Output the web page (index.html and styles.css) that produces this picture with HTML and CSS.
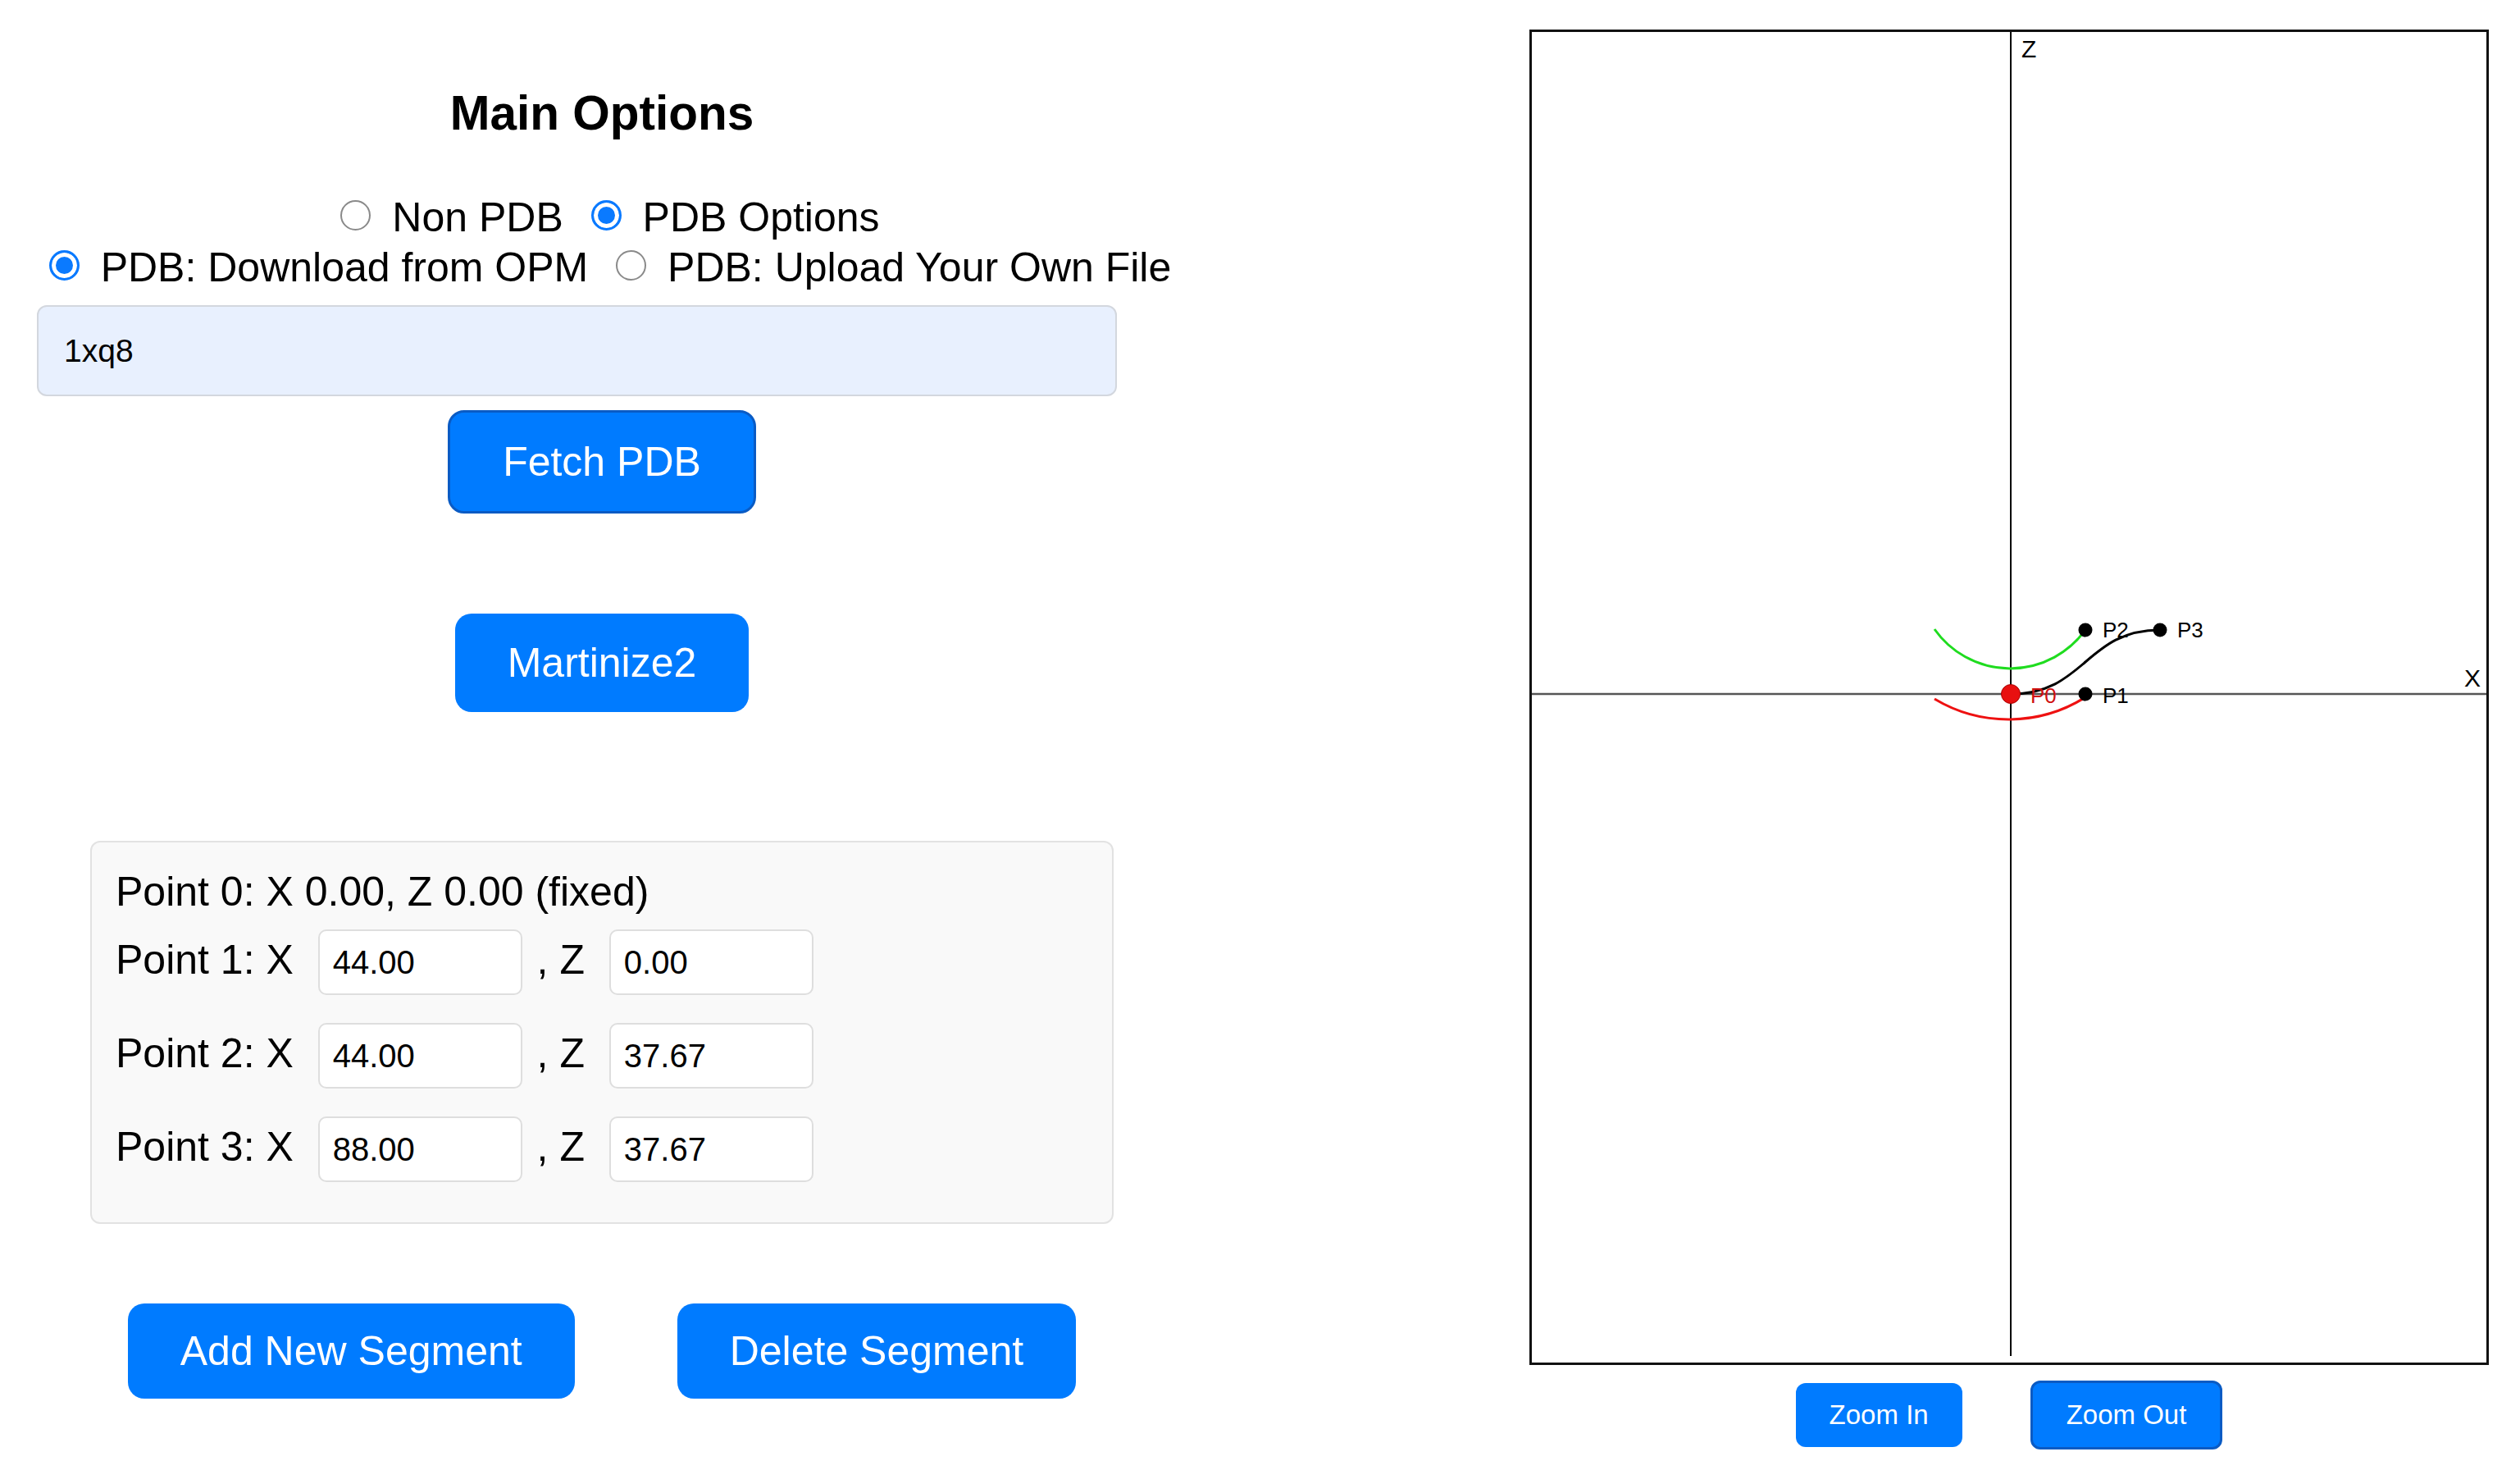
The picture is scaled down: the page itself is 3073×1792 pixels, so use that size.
FILE: index.html
```html
<!DOCTYPE html>
<html lang="en">
<head>
    <meta charset="UTF-8">
    <meta name="viewport" content="width=device-width, initial-scale=1.0">
    <title>Membrane Curve Builder</title>
    <link rel="stylesheet" href="styles.css">
</head>
<body>
    <div class="page">
        <div class="left">
            <h3>Main Options</h3>
            <div class="radios">
                <div class="radio-row">
                    <input type="radio" name="mode"> Non PDB
                    <input type="radio" name="mode" checked> PDB Options
                </div>
                <div class="radio-row">
                    <input type="radio" name="source" checked> PDB: Download from OPM
                    <input type="radio" name="source"> PDB: Upload Your Own File
                </div>
            </div>
            <input type="text" class="pdb-id" value="1xq8">
            <div class="btn-row fetch"><button class="btn focused">Fetch PDB</button></div>
            <div class="btn-row martini"><button class="btn">Martinize2</button></div>

            <div class="points">
                <div>Point 0: X 0.00, Z 0.00 (fixed)</div>
                <div class="point-row">Point 1: X <input class="coord" value="44.00"> , Z <input class="coord" value="0.00"></div>
                <div class="point-row">Point 2: X <input class="coord" value="44.00"> , Z <input class="coord" value="37.67"></div>
                <div class="point-row">Point 3: X <input class="coord" value="88.00"> , Z <input class="coord" value="37.67"></div>
            </div>

            <div class="seg-row">
                <button class="btn seg">Add New Segment</button>
                <button class="btn seg">Delete Segment</button>
            </div>
        </div>

        <div class="right">
            <div class="plot">
                <svg width="1164" height="1622" viewBox="0 0 1164 1622">
                    <line x1="0" y1="807" x2="1164" y2="807" stroke="#555" stroke-width="2.5"/>
                    <line x1="584" y1="0" x2="584" y2="1614" stroke="#000" stroke-width="2"/>
                    <text class="axis-label" x="597" y="31">Z</text>
                    <text class="axis-label" x="1137" y="798">X</text>

                    <path d="M491 728 A113 113 0 0 0 675 729" fill="none" stroke="#1fdc1f" stroke-width="3"/>
                    <path d="M491 813 A176 176 0 0 0 675 811" fill="none" stroke="#ee1111" stroke-width="3"/>
                    <path d="M584 807 C675 807 675 729 766 729" fill="none" stroke="#000" stroke-width="3"/>

                    <circle cx="584" cy="807" r="11.5" fill="#e81010" stroke="#a00" stroke-width="1"/>
                    <circle cx="675" cy="807" r="8.5" fill="#000"/>
                    <circle cx="675" cy="729" r="8.5" fill="#000"/>
                    <circle cx="766" cy="729" r="8.5" fill="#000"/>

                    <text class="pt-label red" x="608" y="818">P0</text>
                    <text class="pt-label" x="696" y="818">P1</text>
                    <text class="pt-label" x="696" y="738">P2</text>
                    <text class="pt-label" x="787" y="738">P3</text>
                </svg>
            </div>
            <div class="zoom-row">
                <button class="zbtn">Zoom In</button>
                <button class="zbtn focused">Zoom Out</button>
            </div>
        </div>
    </div>
</body>
</html>
```

FILE: styles.css
```css
body {
    margin: 0;
    font-family: "Liberation Sans", Arial, sans-serif;
    font-size: 50px;
    color: #000;
    background: #fff;
}
.page {
    display: flex;
    justify-content: space-between;
}
.left {
    width: 1468px;
    text-align: center;
}
h3 {
    font-size: 58.5px;
    font-weight: bold;
    margin: 104px 0 0;
}
.radios {
    margin-top: 64px;
}
.radio-row {
    line-height: 61px;
    white-space: nowrap;
}
input[type="radio"] {
    appearance: none;
    -webkit-appearance: none;
    width: 37px;
    height: 37px;
    margin: 0 12px 0 20px;
    border: 2px solid #8a8a8a;
    border-radius: 50%;
    background: #fff;
    vertical-align: middle;
    box-sizing: border-box;
    position: relative;
    top: -6px;
}
input[type="radio"]:checked {
    border: 3px solid #0a7aff;
    background: #0a7aff;
    box-shadow: inset 0 0 0 5px #fff;
}
.pdb-id {
    display: block;
    box-sizing: border-box;
    width: 1317px;
    height: 111px;
    margin: 15px 0 0 45px;
    padding: 0 31px;
    font-family: inherit;
    font-size: 39px;
    color: #000;
    background: #e8f0fe;
    border: 2px solid #d3d7de;
    border-radius: 12px;
}
.btn-row {
    display: flex;
    justify-content: center;
}
.fetch { margin-top: 17px; }
.martini { margin-top: 122px; }
.btn {
    font-family: inherit;
    font-size: 50px;
    line-height: 56px;
    color: #fff;
    background: #007bff;
    border: none;
    border-radius: 20px;
    padding: 32px 64px;
    cursor: pointer;
}
.btn.focused {
    border: 3px solid #0a5bc4;
}
.points {
    box-sizing: border-box;
    width: 1248px;
    margin: 157px auto 0;
    padding: 31px 29px 32px;
    text-align: left;
    background: #f9f9f9;
    border: 2px solid #e2e2e2;
    border-radius: 12px;
    white-space: nowrap;
}
.coord {
    box-sizing: border-box;
    width: 249px;
    height: 80px;
    margin: 17px 4px 17px 16px;
    padding: 0 16px;
    font-family: inherit;
    font-size: 40px;
    color: #000;
    background: #fff;
    border: 2px solid #dedede;
    border-radius: 10px;
}
.seg-row {
    display: flex;
    justify-content: center;
    gap: 125px;
    margin-top: 97px;
}
.btn.seg {
    padding: 30px 64px;
}
.right {
    padding: 36px 38px 0 0;
}
.plot {
    border: 3px solid #111;
    width: 1164px;
    height: 1622px;
}
.plot svg {
    display: block;
}
.axis-label {
    font-family: "Liberation Sans", Arial, sans-serif;
    font-size: 30px;
    fill: #000;
}
.pt-label {
    font-family: "Liberation Sans", Arial, sans-serif;
    font-size: 26px;
    fill: #000;
}
.pt-label.red {
    fill: #d01010;
}
.zoom-row {
    display: flex;
    justify-content: center;
    align-items: center;
    gap: 83px;
    margin-top: 19px;
}
.zbtn {
    font-family: inherit;
    font-size: 33px;
    line-height: 38px;
    color: #fff;
    background: #007bff;
    border: none;
    border-radius: 12px;
    padding: 20px 41px;
    cursor: pointer;
}
.zbtn.focused {
    border: 3px solid #0a5bc4;
}
```
